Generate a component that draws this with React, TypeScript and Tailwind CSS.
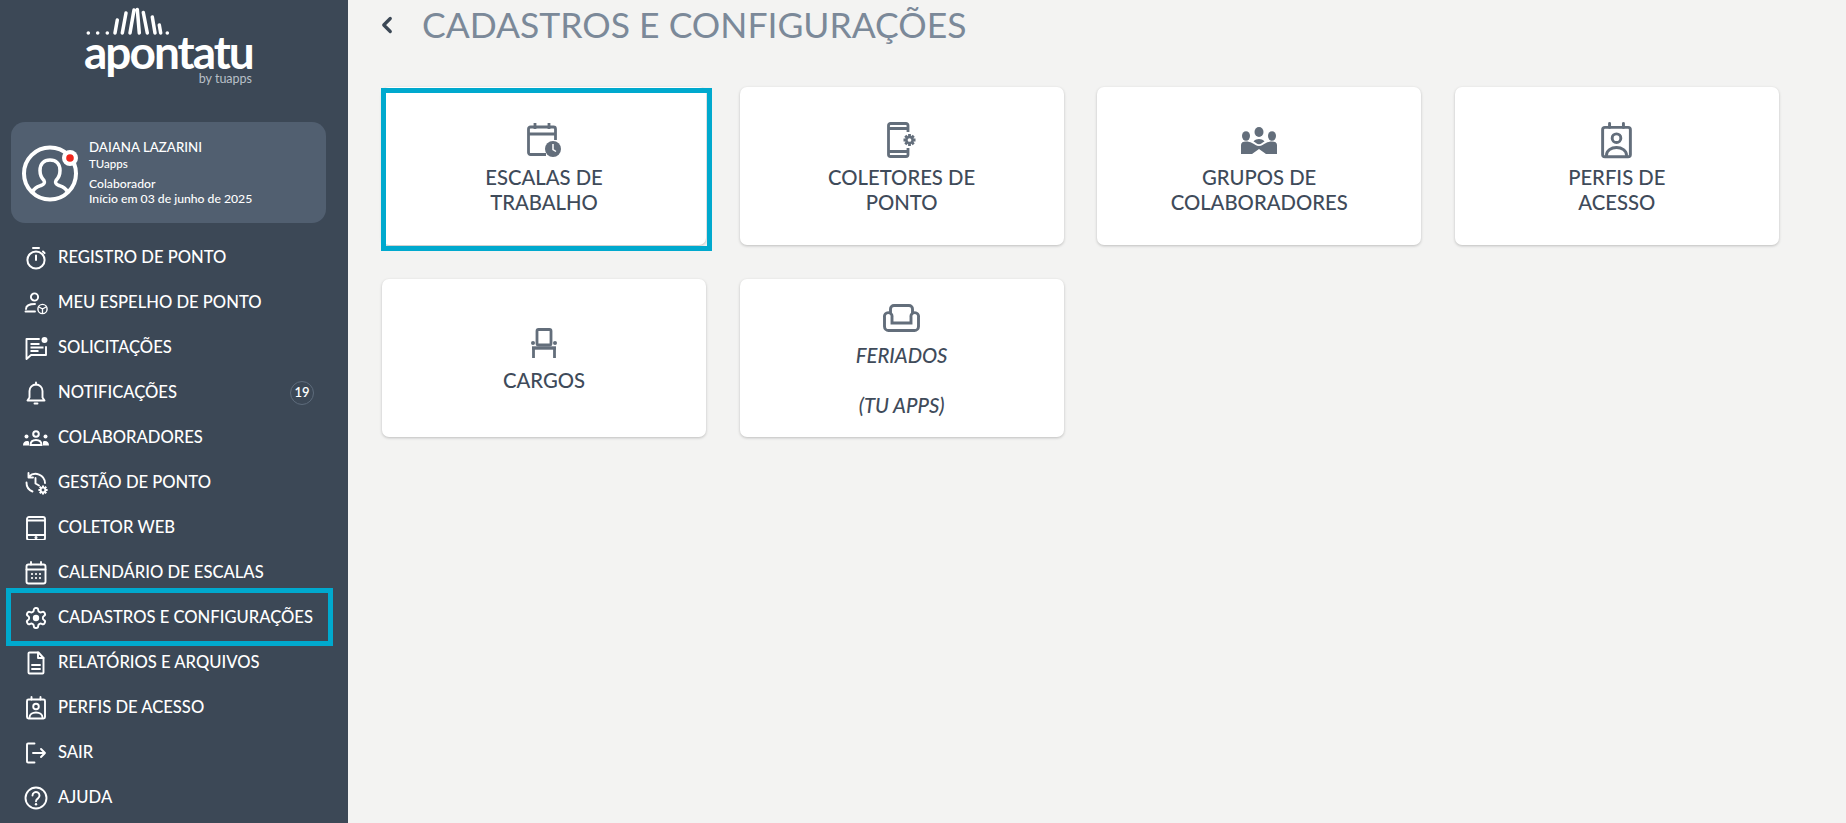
import React from 'react';
import { ChevronLeft } from 'lucide-react';

type IconProps = { className?: string };

const Svg = ({ className, box = '0 0 24 24', sw = 1.9, children }: IconProps & { box?: string; sw?: number; children: React.ReactNode }) => (
  <svg viewBox={box} fill="none" stroke="currentColor" strokeWidth={sw} strokeLinecap="round" strokeLinejoin="round" className={className}>
    {children}
  </svg>
);

// small solid cog used on two icons
const MiniGear = ({ cx, cy, r }: { cx: number; cy: number; r: number }) => (
  <g strokeLinecap="butt">
    {[0, 45, 90, 135].map((a) => (
      <path
        key={a}
        d={`M${cx - r} ${cy}H${cx - r * 0.6}M${cx + r * 0.6} ${cy}H${cx + r}`}
        strokeWidth={r * 0.46}
        transform={`rotate(${a} ${cx} ${cy})`}
      />
    ))}
    <circle cx={cx} cy={cy} r={r * 0.52} strokeWidth={r * 0.42} fill="none" />
  </g>
);

const StopwatchIcon = (p: IconProps) => (
  <Svg {...p} sw={2}>
    <circle cx="12" cy="14" r="8.6" />
    <path d="M9 2h6M12 9.500v4.500M19 5.500l1.600 1.600" />
  </Svg>
);
const PersonCubeIcon = (p: IconProps) => (
  <Svg {...p} sw={1.9}>
    <circle cx="10.500" cy="6" r="3.600" />
    <path d="M11 13c-5 0-9 1.600-9 5M1.500 20.500H11" />
    <circle cx="18.500" cy="18" r="4.600" strokeWidth="1.400" />
    <path d="M15 16l3.500 2 3.500-2M18.500 18v4" strokeWidth="1.300" />
  </Svg>
);
const RequestIcon = (p: IconProps) => (
  <Svg {...p} sw={1.9}>
    <path d="M15 3H2.500v20l4.500-4h15v-8" />
    <path d="M6.500 8h9M6.500 11.500h13M6.500 15h8" strokeLinecap="butt" />
    <circle cx="20.500" cy="4" r="3" fill="currentColor" stroke="none" />
  </Svg>
);
const BellIcon = (p: IconProps) => (
  <Svg {...p} sw={1.9}>
    <path d="M12 3.500a6.500 6.500 0 0 0-6.500 6.500v6.500L3.500 19.500h17l-2-3V10A6.500 6.500 0 0 0 12 3.500z" />
    <path d="M12 1.500v2M10.500 22.500h3" />
  </Svg>
);
const TeamIcon = (p: IconProps) => (
  <svg viewBox="0 0 28 16" fill="currentColor" className={p.className}>
    <circle cx="14" cy="4" r="2.800" fill="none" stroke="currentColor" strokeWidth="2" />
    <path d="M8.500 15c0-3.500 2-5 5.500-5s5.500 1.500 5.500 5z" fill="none" stroke="currentColor" strokeWidth="2" />
    <circle cx="4.500" cy="6.500" r="2" />
    <circle cx="23.500" cy="6.500" r="2" />
    <path d="M1 15.500c0-3 1.500-4.500 4-4.500 1 0 2 .3 2 1v3.500zM27 15.500c0-3-1.500-4.500-4-4.500-1 0-2 .3-2 1v3.500z" />
  </svg>
);
const HistoryGearIcon = (p: IconProps) => (
  <Svg {...p} sw={1.9}>
    <path d="M5 5.500A9.500 9.500 0 0 1 21 12M2.500 11.500a9.500 9.500 0 0 0 6 9M4.500 2v4.500H9" />
    <path d="M11.500 7v5.500l3.500 2" />
    <MiniGear cx={19} cy={19} r={4.600} />
  </Svg>
);
const TabletIcon = (p: IconProps) => (
  <Svg {...p} sw={1.9}>
    <rect x="3" y="1" width="18" height="23" rx="2" />
    <path d="M3 4.500h18M3 19h18" strokeLinecap="butt" />
    <circle cx="12" cy="21.500" r=".6" fill="currentColor" />
  </Svg>
);
const CalendarDotsIcon = (p: IconProps) => (
  <Svg {...p} sw={1.9}>
    <rect x="2.500" y="3.500" width="19" height="19" rx="2" />
    <path d="M7 1v2.500M17 1v2.500M2.500 8.500h19" />
    <path d="M8 13h.01M12 13h.01M16 13h.01M8 17h.01M12 17h.01M16 17h.01" strokeWidth="2.200" />
  </Svg>
);
const GearIcon = (p: IconProps) => (
  <Svg {...p} sw={1.9}>
    <path d="M12.220 2h-.44a2 2 0 0 0-2 2v.18a2 2 0 0 1-1 1.730l-.43.25a2 2 0 0 1-2 0l-.15-.08a2 2 0 0 0-2.730.73l-.22.38a2 2 0 0 0 .73 2.730l.15.1a2 2 0 0 1 1 1.720v.51a2 2 0 0 1-1 1.740l-.15.09a2 2 0 0 0-.73 2.730l.22.38a2 2 0 0 0 2.730.73l.15-.08a2 2 0 0 1 2 0l.43.25a2 2 0 0 1 1 1.730V20a2 2 0 0 0 2 2h.44a2 2 0 0 0 2-2v-.18a2 2 0 0 1 1-1.730l.43-.25a2 2 0 0 1 2 0l.15.08a2 2 0 0 0 2.730-.73l.22-.39a2 2 0 0 0-.73-2.730l-.15-.08a2 2 0 0 1-1-1.740v-.5a2 2 0 0 1 1-1.740l.15-.09a2 2 0 0 0 .73-2.730l-.22-.38a2 2 0 0 0-2.730-.73l-.15.08a2 2 0 0 1-2 0l-.43-.25a2 2 0 0 1-1-1.730V4a2 2 0 0 0-2-2z" />
    <circle cx="12" cy="12" r="3.200" fill="currentColor" stroke="none" />
  </Svg>
);
const DocIcon = (p: IconProps) => (
  <Svg {...p} sw={1.9}>
    <path d="M5.500 1.500h9l5 5.500v14.500a1 1 0 0 1-1 1h-13a1 1 0 0 1-1-1v-19a1 1 0 0 1 1-1z" />
    <path d="M14 1.500V7h5.500M8 14h8M8 18h8" />
  </Svg>
);
const BadgeIcon = (p: IconProps) => (
  <Svg {...p} sw={1.9}>
    <rect x="3" y="3.500" width="18" height="19" rx="1.500" />
    <path d="M7.500 1v2.500M16.500 1v2.500" />
    <circle cx="12" cy="10.500" r="2.800" />
    <path d="M5.500 21.500c0-3 3-5 6.500-5s6.500 2 6.500 5" />
  </Svg>
);
const LogoutIcon = (p: IconProps) => (
  <Svg {...p} sw={1.9}>
    <path d="M10.500 2.500H4a1 1 0 0 0-1 1v17a1 1 0 0 0 1 1h6.500" />
    <path d="M9 12h12M17 8l4 4-4 4" />
  </Svg>
);
const HelpIcon = (p: IconProps) => (
  <Svg {...p} sw={1.9}>
    <circle cx="12" cy="12" r="10.500" />
    <path d="M8.500 9.500a3.500 3.500 0 1 1 5.500 2.900c-1.200.8-2 1.500-2 2.800" />
    <path d="M12 18.300h.01" strokeWidth="2.400" />
  </Svg>
);

const ScheduleCardIcon = (p: IconProps) => (
  <svg viewBox="0 0 34 34" fill="none" stroke="currentColor" strokeWidth="2.800" className={p.className}>
    <path d="M19 31.500H3.500a2 2 0 0 1-2-2V6a2 2 0 0 1 2-2h23a2 2 0 0 1 2 2v11" />
    <path d="M1.500 11h27M8 0v6M22 0v6" />
    <circle cx="26" cy="26" r="8" fill="currentColor" stroke="none" />
    <path d="M26 21v5.500l3 2" stroke="#fff" strokeWidth="1.500" />
  </svg>
);
const CollectorCardIcon = (p: IconProps) => (
  <svg viewBox="0 0 29 36" fill="none" stroke="currentColor" strokeWidth="2.800" className={p.className}>
    <path d="M21 10V3.500a2 2 0 0 0-2-2H3.500a2 2 0 0 0-2 2v29a2 2 0 0 0 2 2H19a2 2 0 0 0 2-2V26" />
    <path d="M1.500 6.500H21M1.500 29.500H21" />
    <MiniGear cx={22.500} cy={18} r={6} />
  </svg>
);
const GroupCardIcon = (p: IconProps) => (
  <svg viewBox="0 0 36 27" fill="currentColor" className={p.className}>
    <ellipse cx="18" cy="5" rx="4.500" ry="5" />
    <ellipse cx="5" cy="9" rx="4" ry="4.800" />
    <ellipse cx="31" cy="9" rx="4" ry="4.800" />
    <path d="M0 27V18c0-2.500 2-3.500 5-3.500 2.500 0 4 .5 6 1.500 3 1.500 4 3 7 3s4-1.500 7-3c2-1 3.500-1.500 6-1.500 3 0 5 1 5 3.500v9H25l-7-5-7 5z" />
    <path d="M12.500 14.500c1.500-1.800 3.500-2.500 5.500-2.500s4 .7 5.500 2.500c-2 1-3.500 2.700-5.500 2.700s-3.500-1.700-5.500-2.700z" />
  </svg>
);
const ChairCardIcon = (p: IconProps) => (
  <svg viewBox="0 0 26 30" fill="none" stroke="currentColor" strokeWidth="2.800" className={p.className}>
    <rect x="6" y="1.500" width="14" height="15.500" rx="1.500" />
    <path d="M1 20h24" strokeWidth="3.400" />
    <path d="M2.500 20v10M23.500 20v10" />
    <circle cx="2" cy="15" r="2" fill="currentColor" stroke="none" />
    <circle cx="24" cy="15" r="2" fill="currentColor" stroke="none" />
  </svg>
);
const SofaCardIcon = (p: IconProps) => (
  <svg viewBox="0 0 37 28" fill="none" stroke="currentColor" strokeWidth="2.900" className={p.className}>
    <path d="M7.500 9V5a3.500 3.500 0 0 1 3.500-3.500h15A3.500 3.500 0 0 1 29.500 5v4" />
    <path d="M9 19V13a3.800 3.800 0 1 0-7.500 0v9.500a4 4 0 0 0 4 4h26a4 4 0 0 0 4-4V13a3.800 3.800 0 1 0-7.500 0v6z" />
  </svg>
);

const menu = [
  { label: 'REGISTRO DE PONTO', icon: StopwatchIcon },
  { label: 'MEU ESPELHO DE PONTO', icon: PersonCubeIcon },
  { label: 'SOLICITAÇÕES', icon: RequestIcon },
  { label: 'NOTIFICAÇÕES', icon: BellIcon, badge: '19' },
  { label: 'COLABORADORES', icon: TeamIcon, wide: true },
  { label: 'GESTÃO DE PONTO', icon: HistoryGearIcon },
  { label: 'COLETOR WEB', icon: TabletIcon },
  { label: 'CALENDÁRIO DE ESCALAS', icon: CalendarDotsIcon },
  { label: 'CADASTROS E CONFIGURAÇÕES', icon: GearIcon, active: true },
  { label: 'RELATÓRIOS E ARQUIVOS', icon: DocIcon },
  { label: 'PERFIS DE ACESSO', icon: BadgeIcon },
  { label: 'SAIR', icon: LogoutIcon },
  { label: 'AJUDA', icon: HelpIcon },
];

const Logo = () => (
  <div className="flex flex-col items-end w-[172px] ml-[84px] text-white">
    <svg viewBox="0 0 172 36" className="w-[172px] h-[36px] shrink-0" stroke="currentColor" strokeLinecap="round" fill="none">
      <g strokeWidth="3.600">
        <path d="M4.300 33h.01M13.700 33h.01M23.300 33h.01M83.300 33h.01" />
      </g>
      <g strokeWidth="3.500">
        <path d="M31 33l2.300-13M38.300 33L42 13M46 33l4-23M55.300 33l-2-23.500M63.300 33l-4-20.500M71 33l-2.700-16M76.700 33l-1.400-8" />
      </g>
    </svg>
    <span className="self-start -mt-[6px] h-[44px] text-[46px] leading-[44px] font-bold tracking-[-2px] font-['Lato']">apontatu</span>
    <span className="text-[12.500px] leading-[12px] -mt-[1px] mr-[4px] text-[#b9c0c8] font-['Lato']">by tuapps</span>
  </div>
);

const Avatar = () => (
  <svg viewBox="0 0 60 60" className="w-[60px] h-[60px] shrink-0 text-white" fill="none" stroke="currentColor">
    <circle cx="30" cy="30.500" r="26" strokeWidth="4" />
    <path d="M13 48.500c1-3.500 4-4.500 8-6 3.500-1.300 4-3 3-5-2.500-2.500-4-6-4-10 0-7 4-10.500 10-10.500s10 3.500 10 10.500c0 4-1.500 7.500-4 10-1 2-.5 3.700 3 5 4 1.500 7 2.500 8 6" strokeWidth="3.500" />
    <circle cx="50" cy="15" r="8" fill="#fff" stroke="none" />
    <circle cx="50" cy="15" r="3.800" fill="#f0261c" stroke="none" />
  </svg>
);

const Sidebar = () => (
  <aside className="w-[348px] h-screen shrink-0 bg-[#3c4856] text-white font-['Lato'] overflow-hidden">
    <div className="h-[122px]">
      <Logo />
    </div>
    <div className="ml-[11px] w-[315px] h-[101px] rounded-[14px] bg-[#515f70] flex items-center pl-[9px] gap-[9px]">
      <Avatar />
      <div className="flex flex-col font-medium">
        <span className="text-[13.300px] leading-[17px]">DAIANA LAZARINI</span>
        <span className="text-[11.500px] leading-[15px]">TUapps</span>
        <span className="mt-[5px] text-[12.200px] leading-[15px]">Colaborador</span>
        <span className="text-[12.200px] leading-[15px]">Início em 03 de junho de 2025</span>
      </div>
    </div>
    <nav className="mt-[12px]">
      {menu.map((item) => {
        const Icon = item.icon;
        return (
          <a key={item.label} className="relative flex items-center h-[45px] pl-[22px] text-[16.600px] font-medium">
            <span className="w-[28px] h-[24px] flex items-center justify-center shrink-0">
              <Icon className={item.wide ? 'w-[28px] h-[16px]' : 'w-[24px] h-[24px]'} />
            </span>
            <span className="ml-[8px] whitespace-nowrap">{item.label}</span>
            {item.badge && (
              <span className="ml-auto mr-[34px] w-[24px] h-[24px] rounded-full border border-[#5d6b7b] flex items-center justify-center text-[13px] font-semibold">
                {item.badge}
              </span>
            )}
            {item.active && (
              <span className="absolute left-[6px] w-[327px] top-[-7px] h-[58px] border-[5px] border-[#00a9ce]" />
            )}
          </a>
        );
      })}
    </nav>
  </aside>
);

const cards = [
  { lines: ['ESCALAS DE', 'TRABALHO'], icon: ScheduleCardIcon, size: 'w-[34px] h-[34px]', active: true },
  { lines: ['COLETORES DE', 'PONTO'], icon: CollectorCardIcon, size: 'w-[29px] h-[36px]' },
  { lines: ['GRUPOS DE', 'COLABORADORES'], icon: GroupCardIcon, size: 'w-[36px] h-[27px]' },
  { lines: ['PERFIS DE', 'ACESSO'], icon: BadgeIcon, size: 'w-[37px] h-[37px]' },
  { lines: ['CARGOS'], icon: ChairCardIcon, size: 'w-[26px] h-[30px]', tight: true },
  { lines: ['FERIADOS', '', '(TU APPS)'], icon: SofaCardIcon, size: 'w-[37px] h-[28px]', italic: true, tight: true },
];

export default function App() {
  return (
    <div className="flex h-screen overflow-hidden bg-[#f3f3f2]">
      <Sidebar />
      <main className="flex-1 pl-[34px] font-['Lato']">
        <header className="flex items-center h-[50px] mb-[37px]">
          <ChevronLeft className="w-[26px] h-[26px] -ml-[8px] text-[#3c4856]" strokeWidth={3} />
          <h1 className="ml-[22px] text-[35.500px] leading-[50px] text-[#7b8999]">CADASTROS E CONFIGURAÇÕES</h1>
        </header>
        <div className="grid grid-cols-[repeat(4,324px)] auto-rows-[158px] gap-x-[33.600px] gap-y-[34px]">
          {cards.map((card) => {
            const Icon = card.icon;
            return (
              <div
                key={card.lines[0]}
                className={`relative bg-white rounded-[7px] shadow-[0_1px_3px_rgba(0,0,0,0.22)] flex flex-col items-center justify-center text-[20.300px] leading-[25px] font-medium text-[#3f4b5a] ${card.italic ? 'italic' : ''} ${card.tight ? 'pt-[1px]' : 'pt-[5px]'}`}
              >
                <span className="h-[36px] mb-[7px] flex items-center justify-center text-[#636e7b]">
                  <Icon className={card.size} />
                </span>
                {card.lines.map((line, i) => (
                  <span key={i} className="h-[25px]">{line}</span>
                ))}
                {card.active && (
                  <span className="absolute left-[-1px] top-[1px] w-[331px] h-[163px] border-[5px] border-[#00a9ce]" />
                )}
              </div>
            );
          })}
        </div>
      </main>
    </div>
  );
}
